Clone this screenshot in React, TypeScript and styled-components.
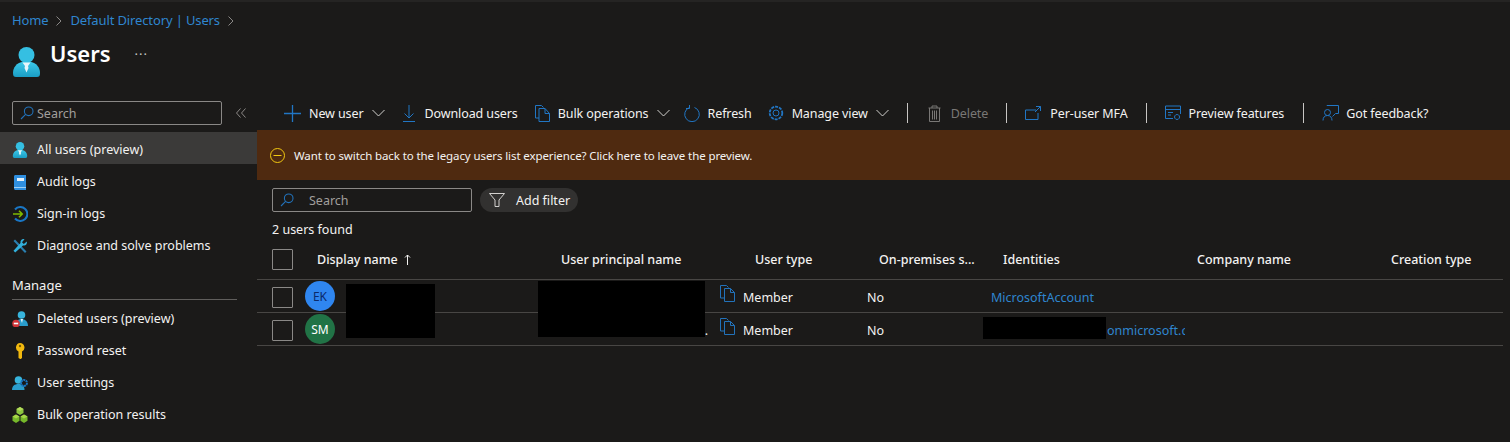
import React from 'react'
import styled, { createGlobalStyle } from 'styled-components'

const GlobalStyle = createGlobalStyle`
  html, body {
    margin: 0;
    padding: 0;
    background: #1b1a19;
  }
  body {
    font-family: "Noto Sans", "Open Sans", "Liberation Sans", sans-serif;
    font-size: 12.5px;
    color: #f3f2f1;
  }
`

const Page = styled.div`
  box-sizing: border-box;
  width: 1510px;
  height: 442px;
  overflow: hidden;
  background: #1b1a19;
  border-top: 2px solid #252423;
`

const Breadcrumb = styled.nav`
  display: flex;
  align-items: center;
  height: 18px;
  padding: 9px 0 0 12px;
  font-size: 13px;
  letter-spacing: -0.13px;
  color: #2f86cf;
`

const Crumb = styled.span`
  white-space: nowrap;
`

const CrumbArrow = styled.svg`
  width: 8px;
  height: 10px;
  margin: 1px 7px 0 7px;
  fill: none;
  stroke: #8a8886;
  stroke-width: 1;
`

const TitleRow = styled.header`
  display: flex;
  align-items: flex-start;
  height: 68px;
  padding-left: 13px;
`

const TitleIcon = styled.div`
  width: 27px;
  height: 30px;
  margin-top: 18px;
  svg {
    display: block;
    width: 27px;
    height: 30px;
  }
`

const Title = styled.h1`
  margin: 6px 0 0 10px;
  font-size: 22px;
  line-height: 36px;
  font-weight: 600;
  color: #ffffff;
`

const More = styled.span`
  margin: 12px 0 0 24px;
  font-size: 13px;
  letter-spacing: 1px;
  color: #c8c6c4;
`

const Body = styled.div`
  display: grid;
  grid-template-columns: 257px 1fr;
`

const Sidebar = styled.aside`
  display: flex;
  flex-direction: column;
  padding-top: 4px;
`

const SideSearchRow = styled.div`
  display: flex;
  align-items: center;
  padding-left: 12px;
  margin-bottom: 7px;
`

const SearchBox = styled.div<{ $width: number; $height: number; $gap: number }>`
  box-sizing: border-box;
  display: flex;
  align-items: center;
  gap: ${(p) => p.$gap}px;
  width: ${(p) => p.$width}px;
  height: ${(p) => p.$height}px;
  padding-left: 7px;
  border: 1px solid #8a8886;
  border-radius: 2px;
  color: #a19f9d;
`

const Collapse = styled.svg`
  width: 10px;
  height: 10px;
  margin-left: 14px;
  fill: none;
  stroke: #8a8886;
  stroke-width: 1;
`

const NavList = styled.div`
  display: flex;
  flex-direction: column;
`

const NavItem = styled.div<{ $active?: boolean }>`
  display: flex;
  align-items: center;
  box-sizing: border-box;
  height: 32px;
  padding: 3px 0 0 12px;
  background: ${(p) => (p.$active ? '#3b3a39' : 'transparent')};
  white-space: nowrap;
`

const NavIcon = styled.span`
  display: flex;
  width: 16px;
  height: 16px;
  margin-right: 9px;
  svg {
    display: block;
    width: 16px;
    height: 16px;
  }
`

const SectionTitle = styled.div`
  box-sizing: border-box;
  width: 225px;
  height: 28px;
  margin: 12px 0 1px 12px;
  line-height: 26px;
  font-size: 13px;
  border-bottom: 1px solid #605e5c;
`

const Main = styled.main`
  display: flex;
  flex-direction: column;
`

const Toolbar = styled.div`
  display: flex;
  align-items: center;
  box-sizing: border-box;
  height: 33px;
  padding: 0 0 1px 27px;
  letter-spacing: -0.1px;
  white-space: nowrap;
`

const ToolButton = styled.div<{ $gap?: number; $before?: number; $after?: number; $disabled?: boolean }>`
  display: flex;
  align-items: center;
  gap: ${(p) => p.$gap ?? 8}px;
  margin-left: ${(p) => p.$before ?? 0}px;
  margin-right: ${(p) => p.$after ?? 16}px;
  color: ${(p) => (p.$disabled ? '#797775' : '#f3f2f1')};
  svg {
    display: block;
  }
`

const ToolDivider = styled.div`
  width: 1px;
  height: 20px;
  margin-right: 18px;
  background: #c8c6c4;
`

const Banner = styled.div`
  display: flex;
  align-items: center;
  gap: 9px;
  height: 50px;
  padding-left: 13px;
  background: #4f2a10;
  font-size: 11.5px;
  letter-spacing: -0.1px;
  svg {
    display: block;
  }
`

const FilterRow = styled.div`
  display: flex;
  align-items: center;
  gap: 8px;
  padding: 8px 0 0 15px;
`

const FilterPill = styled.div`
  box-sizing: border-box;
  display: flex;
  align-items: center;
  gap: 11px;
  width: 98px;
  height: 24px;
  padding-left: 9px;
  border-radius: 12px;
  background: #323130;
  svg {
    display: block;
  }
`

const Count = styled.div`
  height: 18px;
  line-height: 18px;
  margin: 9px 0 0 15px;
`

const Table = styled.div`
  position: relative;
  width: 1246px;
  margin-top: 8px;
`

const HeaderRow = styled.div`
  display: grid;
  grid-template-columns: 45px 244px 194px 124px 124px 194px 194px 1fr;
  align-items: center;
  box-sizing: border-box;
  height: 33px;
  padding: 0 0 7px 15px;
  border-bottom: 1px solid #484644;
  white-space: nowrap;
  font-weight: 500;
`

const UserRow = styled.div`
  display: grid;
  grid-template-columns: 33px 233px 182px 23px 124px 124px 1fr;
  align-items: center;
  box-sizing: border-box;
  height: 33px;
  padding-left: 15px;
  border-bottom: 1px solid #484644;
  white-space: nowrap;
`

const Checkbox = styled.div<{ $inRow?: boolean }>`
  box-sizing: border-box;
  width: 21px;
  height: 21px;
  margin-top: ${(p) => (p.$inRow ? 3 : 0)}px;
  border: 1px solid #8a8886;
  border-radius: 1px;
`

const Avatar = styled.div<{ $bg: string; $fg: string }>`
  display: flex;
  align-items: center;
  justify-content: center;
  width: 30px;
  height: 30px;
  border-radius: 50%;
  font-size: 12px;
  background: ${(p) => p.$bg};
  color: ${(p) => p.$fg};
`

const CopyIcon = styled.svg`
  display: block;
  width: 15px;
  height: 17px;
  margin-top: -6px;
  fill: none;
  stroke: #2272ba;
  stroke-width: 1;
`

const Cell = styled.div`
  padding-top: 2px;
`

const Ellipsis = styled.div`
  padding: 2px 12px 0 0;
  text-align: right;
`

const Link = styled.div`
  padding-top: 2px;
  color: #2f86cf;
`

const IdentityCell = styled(Link)`
  box-sizing: border-box;
  width: 194px;
  padding-left: 116px;
  overflow: hidden;
`

const SortArrow = styled.svg`
  width: 7px;
  height: 11px;
  margin-left: 6px;
  vertical-align: -1px;
  fill: none;
  stroke: #f3f2f1;
  stroke-width: 1;
`

const Redaction = styled.div<{ $left: number; $top: number; $width: number; $height: number }>`
  position: absolute;
  left: ${(p) => p.$left}px;
  top: ${(p) => p.$top}px;
  width: ${(p) => p.$width}px;
  height: ${(p) => p.$height}px;
  background: #000000;
`

const BLUE = '#2176c4'

function UserGlyph() {
  return (
    <svg viewBox="0 0 27 30">
      <defs>
        <linearGradient id="usr" x1="0" y1="0" x2="0" y2="1">
          <stop offset="0" stopColor="#3cc8e8" />
          <stop offset="1" stopColor="#1a9dc4" />
        </linearGradient>
      </defs>
      <ellipse cx="13.500" cy="8" rx="8" ry="8" fill="#35bfe2" />
      <path d="M0 26c0-6 4-10 9-11h9c5 1 9 5 9 11 0 3-1 4-3 4H3c-2 0-3-1-3-4z" fill="url(#usr)" />
      <path d="M9.500 15.500h8l-2.500 3.500.5 2-2 4.500-2-4.500.5-2z" fill="#e8f6fb" />
    </svg>
  )
}

function AuditGlyph() {
  return (
    <svg viewBox="0 0 16 16">
      <path d="M2 2.500C2 1.500 2.700 1 3.500 1H14v15H3.500C2.700 16 2 15.300 2 14.500z" fill="#2f8fe0" />
      <rect x="5" y="4" width="7" height="3" fill="#e6f2fb" />
      <rect x="2" y="13" width="12" height="1" fill="#9fd0f5" />
    </svg>
  )
}

function SignInGlyph() {
  return (
    <svg viewBox="0 0 16 16" fill="none">
      <path d="M3 3.500A7 7 0 1 1 3 12.500" stroke="#1a76c4" strokeWidth="2" />
      <path d="M1 8h9M7 4.800 10.200 8 7 11.200" stroke="#7fba00" strokeWidth="1.600" />
    </svg>
  )
}

function WrenchGlyph() {
  return (
    <svg viewBox="0 0 16 16" fill="none">
      <path d="M3 1.500 14.500 13.500 13 15 1.500 3z" fill="#2a7fb0" />
      <path d="M14.800 3.500 11.800 6 10 4.300 12.500 1.200C10 .5 8 2.500 8.500 5L1.500 12.800 3.200 14.500 11 7.500c2.500.5 4.500-1.500 3.800-4z" fill="#32b0dc" />
    </svg>
  )
}

function DeletedGlyph() {
  return (
    <svg viewBox="0 0 16 16">
      <circle cx="9.500" cy="4" r="3.800" fill="#37b4dc" />
      <path d="M3.500 15c0-4 2-7 6-7s6.500 3 6.500 7z" fill="#2a9dcc" />
      <path d="M8.500 8h2.500l-1 4z" fill="#e8f6fb" />
      <circle cx="4" cy="12.500" r="3.800" fill="#d13438" />
      <rect x="1.800" y="11.700" width="4.400" height="1.600" fill="#ffffff" />
    </svg>
  )
}

function KeyGlyph() {
  return (
    <svg viewBox="0 0 16 16">
      <path d="M8 0a4.500 4.500 0 0 1 2 8.500V15l-1.500 1.200L6.500 15V8.500A4.500 4.500 0 0 1 8 0z" fill="#f2b90f" />
      <circle cx="8" cy="3" r="1.200" fill="#7a5c00" />
    </svg>
  )
}

function UserSettingsGlyph() {
  return (
    <svg viewBox="0 0 16 16">
      <circle cx="6.500" cy="5" r="3.800" fill="#37b4dc" />
      <path d="M0 15c0-4 2.500-6 6.500-6s6 2 6 6z" fill="#2a9dcc" />
      <circle cx="12" cy="8" r="3" fill="none" stroke="#1a76c4" strokeWidth="2" strokeDasharray="2 .6" />
      <circle cx="12" cy="8" r="1" fill="#1b1a19" />
    </svg>
  )
}

function BulkGlyph() {
  return (
    <svg viewBox="0 0 16 16">
      <path d="M8 0l3.500 2v4L8 8 4.500 6V2z" fill="#8cc63f" />
      <path d="M8 4 4.500 2 8 0l3.500 2z" fill="#b4dc5a" />
      <path d="M4 7.500l3.500 2v4.300L4 16 .5 13.800V9.500z" fill="#76b82a" />
      <path d="M4 11.500.5 9.500 4 7.500l3.500 2z" fill="#a8d64a" />
      <path d="M12 7.500l3.500 2v4.300L12 16l-3.500-2.200V9.500z" fill="#76b82a" />
      <path d="M12 11.500 8.500 9.500 12 7.500l3.500 2z" fill="#a8d64a" />
    </svg>
  )
}

function SearchGlyph() {
  return (
    <svg width="14" height="14" viewBox="0 0 14 14" fill="none" stroke="#2272ba" strokeWidth="1.100">
      <circle cx="8.700" cy="5.300" r="4.300" />
      <path d="M5.600 8.400 1 13" />
    </svg>
  )
}

function Chevron() {
  return (
    <svg width="13" height="8" viewBox="0 0 13 8" fill="none" stroke="#d2d0ce" strokeWidth="1">
      <path d="M.5 1 6.500 7l6-6" />
    </svg>
  )
}

const icon = (w: number, h: number, children: React.ReactNode, stroke = BLUE) => (
  <svg width={w} height={h} viewBox={`0 0 ${w} ${h}`} fill="none" stroke={stroke} strokeWidth="1">
    {children}
  </svg>
)

const nav = [
  { label: 'All users (preview)', glyph: <UserGlyph />, active: true },
  { label: 'Audit logs', glyph: <AuditGlyph /> },
  { label: 'Sign-in logs', glyph: <SignInGlyph /> },
  { label: 'Diagnose and solve problems', glyph: <WrenchGlyph /> },
]

const manage = [
  { label: 'Deleted users (preview)', glyph: <DeletedGlyph /> },
  { label: 'Password reset', glyph: <KeyGlyph /> },
  { label: 'User settings', glyph: <UserSettingsGlyph /> },
  { label: 'Bulk operation results', glyph: <BulkGlyph /> },
]

const columns = ['User principal name', 'User type', 'On-premises s...', 'Identities', 'Company name', 'Creation type']

function Copy() {
  return (
    <CopyIcon viewBox="0 0 15 17">
      <path d="M4.500 13H.5V.5h6l2 2" />
      <path d="M4.500 3.500h6l4 4v9h-10z" />
      <path d="M10.500 3.500v4h4" />
    </CopyIcon>
  )
}

export default function App() {
  return (
    <Page>
      <GlobalStyle />
      <Breadcrumb>
        <Crumb>Home</Crumb>
        <CrumbArrow viewBox="0 0 8 10"><path d="M1.500.5 6 5 1.500 9.500" /></CrumbArrow>
        <Crumb>Default Directory | Users</Crumb>
        <CrumbArrow viewBox="0 0 8 10"><path d="M1.500.5 6 5 1.500 9.500" /></CrumbArrow>
      </Breadcrumb>
      <TitleRow>
        <TitleIcon><UserGlyph /></TitleIcon>
        <Title>Users</Title>
        <More>...</More>
      </TitleRow>
      <Body>
        <Sidebar>
          <SideSearchRow>
            <SearchBox $width={210} $height={24} $gap={3}>
              <SearchGlyph />
              Search
            </SearchBox>
            <Collapse viewBox="0 0 10 10"><path d="M4.500.5 .5 5l4 4.500M9.500.5 5.500 5l4 4.500" /></Collapse>
          </SideSearchRow>
          <NavList>
            {nav.map((n) => (
              <NavItem key={n.label} $active={n.active}>
                <NavIcon>{n.glyph}</NavIcon>
                {n.label}
              </NavItem>
            ))}
          </NavList>
          <SectionTitle>Manage</SectionTitle>
          <NavList>
            {manage.map((n) => (
              <NavItem key={n.label}>
                <NavIcon>{n.glyph}</NavIcon>
                {n.label}
              </NavItem>
            ))}
          </NavList>
        </Sidebar>
        <Main>
          <Toolbar>
            <ToolButton $after={18}>
              {icon(17, 17, <path d="M8.500 0v17M0 8.500h17" strokeWidth="1.300" />)}
              New user
              <Chevron />
            </ToolButton>
            <ToolButton $after={17} $gap={10}>
              {icon(12, 17, <path d="M6 0v13M1.500 8.500 6 13l4.500-4.500M0 16.500h12" />)}
              Download users
            </ToolButton>
            <ToolButton $after={14}>
              {icon(15, 17, <path d="M4 13H.5V.5h6l2 2M4 3.500h6l4.500 5v8H4zM10 3.500v5h4.500" />)}
              Bulk operations
              <Chevron />
            </ToolButton>
            <ToolButton $after={16}>
              {icon(16, 17, <path d="M5.500 2.500a7.300 7.300 0 1 0 5 0M5.500 0v3.500H2" />)}
              Refresh
            </ToolButton>
            <ToolButton $after={18}>
              {icon(16, 16, <><circle cx="8" cy="8" r="3" /><circle cx="8" cy="8" r="6.300" strokeDasharray="3 1" strokeWidth="1.800" /></>)}
              Manage view
              <Chevron />
            </ToolButton>
            <ToolDivider />
            <ToolButton $before={2} $after={18} $gap={10} $disabled>
              {icon(13, 17, <path d="M.5 3h12M4 3V1h5v2M1.500 3v13.500h10V3M4.500 5.500v9M6.500 5.500v9M8.500 5.500v9" />, '#797775')}
              Delete
            </ToolButton>
            <ToolDivider />
            <ToolButton $after={18} $gap={9}>
              {icon(16, 14, <path d="M11 4H.5v9.500H13V7M11 .5h4.500V5M15.500.5 10 6" />)}
              Per-user MFA
            </ToolButton>
            <ToolDivider />
            <ToolButton $after={19} $gap={8}>
              {icon(16, 16, <path d="M.5 1h15v8M8 13.500H.5V1M.5 4.500h15M3 7.500h5M3 10h3M12 9.500a2.500 2.500 0 1 0 .1 0z" />)}
              Preview features
            </ToolButton>
            <ToolDivider />
            <ToolButton $gap={7}>
              {icon(17, 16, <path d="M5 1V.5h11.500v8h-3l-3 3M1 15.500c0-3 1.500-5 4.500-5s4.500 2 4.500 5M5.500 10.500a3 3 0 1 0 0-6 3 3 0 0 0 0 6z" />)}
              Got feedback?
            </ToolButton>
          </Toolbar>
          <Banner>
            <svg width="15" height="15" viewBox="0 0 15 15" fill="none" stroke="#f2c811" strokeWidth="1">
              <circle cx="7.500" cy="7.500" r="7" />
              <path d="M3.500 7.500h8" />
            </svg>
            Want to switch back to the legacy users list experience? Click here to leave the preview.
          </Banner>
          <FilterRow>
            <SearchBox $width={200} $height={24} $gap={15}>
              <SearchGlyph />
              Search
            </SearchBox>
            <FilterPill>
              <svg width="16" height="14" viewBox="0 0 16 14" fill="none" stroke="#d2d0ce" strokeWidth="1">
                <path d="M.5.500h15L10 7v6.500H6V7z" />
              </svg>
              Add filter
            </FilterPill>
          </FilterRow>
          <Count>2 users found</Count>
          <Table>
            <HeaderRow>
              <Checkbox />
              <div>
                Display name
                <SortArrow viewBox="0 0 7 11"><path d="M3.500 11V1M1 3.500 3.500 1 6 3.500" /></SortArrow>
              </div>
              {columns.map((c) => (
                <div key={c}>{c}</div>
              ))}
            </HeaderRow>
            <UserRow>
              <Checkbox $inRow />
              <Avatar $bg="#2f86f0" $fg="#0b2a6b">EK</Avatar>
              <div />
              <Copy />
              <Cell>Member</Cell>
              <Cell>No</Cell>
              <Link>MicrosoftAccount</Link>
            </UserRow>
            <UserRow>
              <Checkbox $inRow />
              <Avatar $bg="#217346" $fg="#ffffff">SM</Avatar>
              <Ellipsis>...</Ellipsis>
              <Copy />
              <Cell>Member</Cell>
              <Cell>No</Cell>
              <IdentityCell>onmicrosoft.com</IdentityCell>
            </UserRow>
            <Redaction $left={89} $top={37} $width={89} $height={54} />
            <Redaction $left={281} $top={34} $width={167} $height={56} />
            <Redaction $left={726} $top={70} $width={123} $height={22} />
          </Table>
        </Main>
      </Body>
    </Page>
  )
}
